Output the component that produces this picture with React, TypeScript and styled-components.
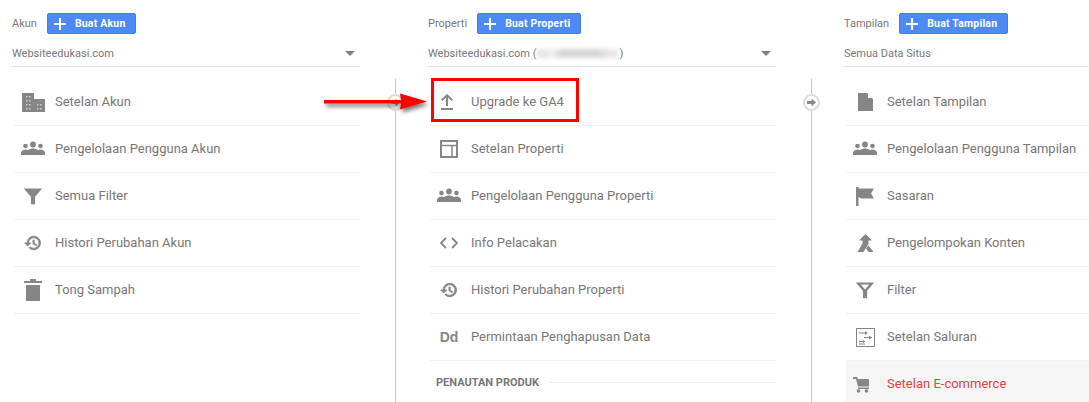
import React from 'react';
import styled, { createGlobalStyle } from 'styled-components';

const GlobalStyle = createGlobalStyle`
  html, body {
    margin: 0;
    padding: 0;
    background: #fff;
    overflow: hidden;
  }
  body {
    font-family: Roboto, "Liberation Sans", sans-serif;
    color: #777;
  }
`;

const Page = styled.div`
  position: relative;
  display: flex;
  width: 1089px;
  height: 402px;
  padding-left: 12px;
  box-sizing: border-box;
  overflow: hidden;
`;

const Column = styled.section`
  flex: 0 0 348px;
  padding-top: 13px;
`;

const Rail = styled.div`
  flex: 0 0 68px;
  display: flex;
  flex-direction: column;
  align-items: center;
  padding: 79px 0 0 2px;
  box-sizing: border-box;
`;

const RailLine = styled.div<{ $grow?: boolean }>`
  width: 1px;
  background: #c6c6c6;
  flex: ${p => (p.$grow ? '1' : '0 0 15px')};
`;

const RailCircle = styled.div`
  width: 17px;
  height: 17px;
  flex: none;
  box-sizing: border-box;
  border: 2px solid #dcdcdc;
  border-radius: 50%;
  display: flex;
  align-items: center;
  justify-content: center;
  color: #8a8a8a;
`;

const Header = styled.div`
  display: flex;
  align-items: center;
  height: 21px;
  gap: 10px;
`;

const HeaderLabel = styled.span`
  font-size: 11px;
  color: #777;
`;

const CreateButton = styled.button`
  display: flex;
  align-items: center;
  height: 21px;
  padding: 0 10px 0 6px;
  gap: 9px;
  border: 1px solid #3f7fe8;
  border-radius: 2px;
  background: #4d8af5;
  color: #fff;
  font-family: Roboto, "Liberation Sans", sans-serif;
  font-size: 10.5px;
  font-weight: 700;
  letter-spacing: 0.2px;
`;

const Select = styled.div`
  display: flex;
  align-items: center;
  justify-content: space-between;
  height: 26px;
  padding: 6px 5px 0 0;
  border-bottom: 1px solid #e0e0e0;
  font-size: 11px;
  color: #777;
`;

const SelectText = styled.span`
  display: flex;
  align-items: center;
`;

const Caret = styled.span`
  width: 0;
  height: 0;
  border-left: 5px solid transparent;
  border-right: 5px solid transparent;
  border-top: 5px solid #808080;
`;

const Redacted = styled.span`
  display: inline-block;
  width: 81px;
  height: 9px;
  margin: 0 1px;
  background: linear-gradient(90deg, #e6e6e6 0 12%, #f2f2f2 18%, #d6d6d6 30% 75%, #e6e6e6 90%);
  filter: blur(2px);
`;

const List = styled.ul`
  list-style: none;
  margin: 12px 0 0;
  padding: 0 0 0 2px;
`;

const Row = styled.li<{ $active?: boolean }>`
  position: relative;
  display: flex;
  align-items: center;
  height: 47px;
  box-sizing: border-box;
  border-bottom: ${p => (p.$active ? 'none' : '1px solid #f0f0f0')};
  background: ${p => (p.$active ? '#f5f5f5' : 'transparent')};
  color: ${p => (p.$active ? '#df3f3f' : '#777')};
  font-size: 13px;
`;

const IconSlot = styled.span`
  flex: 0 0 38px;
  display: flex;
  align-items: center;
  justify-content: center;
  color: #868686;
`;

const RowText = styled.span`
  margin: 0 0 2px 3px;
`;

const DdMark = styled.span`
  font-family: "Liberation Sans", Arial, sans-serif;
  font-size: 14px;
  font-weight: 700;
  color: #868686;
`;

const SectionRow = styled.li`
  display: flex;
  align-items: center;
  gap: 10px;
  height: 42px;
  padding-left: 6px;
  font-size: 11px;
  font-weight: 700;
  color: #777;
`;

const SectionRule = styled.span`
  flex: 1;
  height: 1px;
  background: #ececec;
`;

const Callout = styled.div`
  position: absolute;
  left: 1px;
  top: -1px;
  width: 148px;
  height: 44px;
  box-sizing: border-box;
  border: 3px solid #ff0000;
`;

const ArrowMark = styled.svg`
  position: absolute;
  left: 320px;
  top: 88px;
  overflow: visible;
`;

type IconProps = { size?: number; children: React.ReactNode };

const Icon = ({ size = 24, children }: IconProps) => (
  <svg width={size} height={size} viewBox="0 0 24 24" fill="currentColor">
    {children}
  </svg>
);

const DomainIcon = () => (
  <svg width="23" height="19" viewBox="0 0 23 19" fill="currentColor">
    <path d="M0 0h12v6h11v13H0z" />
    <path
      fill="#cfcfcf"
      d="M4 3h1.500v1.500H4zm3 0h1.500v1.500H7zM4 7h1.500v1.500H4zm3 0h1.500v1.500H7zm-3 4h1.500v1.500H4zm3 0h1.500v1.500H7zm-3 4h1.500v1.500H4zm3 0h1.500v1.500H7zm8-4h1.500v1.500H15zm3 0h1.500v1.500H18zm-3 4h1.500v1.500H15zm3 0h1.500v1.500H18z"
    />
  </svg>
);

const GroupIcon = () => (
  <Icon>
    <circle cx="12" cy="7.500" r="2.900" />
    <circle cx="4.500" cy="9" r="2.300" />
    <circle cx="19.500" cy="9" r="2.300" />
    <path d="M0 18v-2.200c0-2 2.500-3.300 4.500-3.300 1 0 1.800.2 2.500.6 1.300-1 3.200-1.600 5-1.600s3.700.6 5 1.600c.7-.4 1.500-.6 2.500-.6 2 0 4.500 1.300 4.500 3.300V18z" />
  </Icon>
);

const FilterIcon = () => (
  <Icon size={20}>
    <path d="M1 3h22l-8.500 10v9h-5v-9z" />
  </Icon>
);

const FilterHollowIcon = () => (
  <Icon size={20}>
    <path fillRule="evenodd" d="M1 3h22l-8.500 10v9h-5v-9zM7 5.500l5 6 5-6z" />
  </Icon>
);

const HistoryIcon = () => (
  <Icon size={18}>
    <path
      stroke="currentColor"
      strokeWidth="1.200"
      d="M13 3a9 9 0 0 0-9 9H1l3.890 3.890.07.14L9 12H6c0-3.870 3.130-7 7-7s7 3.130 7 7-3.130 7-7 7c-1.930 0-3.680-.79-4.940-2.060l-1.420 1.420A8.954 8.954 0 0 0 13 21a9 9 0 0 0 0-18zm-1 5v5l4.280 2.540.72-1.210-3.500-2.080V8H12z"
    />
  </Icon>
);

const TrashIcon = () => (
  <Icon>
    <path d="M5 7h14v16H5zM3 3h18v2H3zM9 1h6v2H9z" />
  </Icon>
);

const UploadIcon = () => (
  <svg width="16" height="16" viewBox="0 0 16 16" fill="currentColor">
    <path d="M0 14h12v2H0zM5 12V3.500L1.500 7 0 5.600 6 0l6 5.600L10.500 7 7 3.500V12z" />
  </svg>
);

const LayoutIcon = () => (
  <svg width="18" height="18" viewBox="0 0 18 18" fill="none" stroke="currentColor">
    <rect x="1" y="1" width="16" height="16" strokeWidth="2" />
    <path d="M1 5.500h16M12 5.500V17" strokeWidth="1.500" />
  </svg>
);

const CodeIcon = () => (
  <svg width="20" height="12" viewBox="0 0 20 12" fill="none" stroke="currentColor" strokeWidth="1.800">
    <path d="M7 1 2 6l5 5M13 1l5 5-5 5" />
  </svg>
);

const DocIcon = () => (
  <svg width="15" height="18" viewBox="0 0 15 18">
    <path fill="currentColor" d="M0 0h9l6 6v12H0z" />
    <path fill="#fff" d="M10 1l4 4h-4z" />
  </svg>
);

const FlagIcon = () => (
  <svg width="18" height="19" viewBox="0 0 18 19" fill="currentColor">
    <path d="M0 0h2.500v1.500h15.500l-3 5 3 5H5L2.500 10v9H0z" />
  </svg>
);

const MergeIcon = () => (
  <svg width="17" height="18" viewBox="0 0 17 18" fill="currentColor">
    <path d="M8.500 0l6.500 6.500h-3.500v3.500L6.500 18h-6l5-8.500V6.500H2z" />
    <path d="M11.500 11.500 16.500 18h-5L9 14.500z" />
  </svg>
);

const ChannelIcon = () => (
  <svg width="19" height="19" viewBox="0 0 19 19" fill="none" stroke="currentColor">
    <rect x="0.500" y="0.500" width="18" height="18" />
    <path d="M3 5h7M3 13.500h4M8 9.500h8M9 16h-6" strokeWidth="1.200" />
    <path fill="currentColor" stroke="none" d="M9 3l3 2-3 2zM13 7.500l3 2-3 2zM7 12l2.500 1.500L7 15z" />
  </svg>
);

const CartIcon = () => (
  <svg width="24" height="16" viewBox="0 0 24 16" fill="currentColor">
    <path d="M0 0h4l1 2h11v7.500H5L3 2H0z" />
    <path d="M5 10.500h11V12H5z" />
    <circle cx="5.500" cy="14" r="1.800" />
    <circle cx="13.500" cy="14" r="1.800" />
  </svg>
);

const PlusIcon = () => (
  <svg width="12" height="12" viewBox="0 0 12 12" fill="#fff">
    <path d="M5 0h2v5h5v2H7v5H5V7H0V5h5z" />
  </svg>
);

const CircleArrowIcon = () => (
  <svg width="9" height="9" viewBox="0 0 9 9" fill="currentColor">
    <path d="M0 3h4.500V0.500L9 4.500 4.500 8.500V6H0z" />
  </svg>
);

type Item = { label: string; icon: React.ReactNode; active?: boolean; callout?: boolean };

const accountItems: Item[] = [
  { label: 'Setelan Akun', icon: <DomainIcon /> },
  { label: 'Pengelolaan Pengguna Akun', icon: <GroupIcon /> },
  { label: 'Semua Filter', icon: <FilterIcon /> },
  { label: 'Histori Perubahan Akun', icon: <HistoryIcon /> },
  { label: 'Tong Sampah', icon: <TrashIcon /> },
];

const propertyItems: Item[] = [
  { label: 'Upgrade ke GA4', icon: <UploadIcon />, callout: true },
  { label: 'Setelan Properti', icon: <LayoutIcon /> },
  { label: 'Pengelolaan Pengguna Properti', icon: <GroupIcon /> },
  { label: 'Info Pelacakan', icon: <CodeIcon /> },
  { label: 'Histori Perubahan Properti', icon: <HistoryIcon /> },
  { label: 'Permintaan Penghapusan Data', icon: <DdMark>Dd</DdMark> },
];

const viewItems: Item[] = [
  { label: 'Setelan Tampilan', icon: <DocIcon /> },
  { label: 'Pengelolaan Pengguna Tampilan', icon: <GroupIcon /> },
  { label: 'Sasaran', icon: <FlagIcon /> },
  { label: 'Pengelompokan Konten', icon: <MergeIcon /> },
  { label: 'Filter', icon: <FilterHollowIcon /> },
  { label: 'Setelan Saluran', icon: <ChannelIcon /> },
  { label: 'Setelan E-commerce', icon: <CartIcon />, active: true },
];

const renderRows = (items: Item[]) =>
  items.map(item => (
    <Row key={item.label} $active={item.active}>
      <IconSlot>{item.icon}</IconSlot>
      <RowText>{item.label}</RowText>
      {item.callout && <Callout />}
    </Row>
  ));

const ConnectorRail = () => (
  <Rail>
    <RailLine />
    <RailCircle>
      <CircleArrowIcon />
    </RailCircle>
    <RailLine $grow />
  </Rail>
);

const App: React.FC = () => (
  <Page>
    <GlobalStyle />
    <Column>
      <Header>
        <HeaderLabel>Akun</HeaderLabel>
        <CreateButton>
          <PlusIcon />
          Buat Akun
        </CreateButton>
      </Header>
      <Select>
        <SelectText>Websiteedukasi.com</SelectText>
        <Caret />
      </Select>
      <List>{renderRows(accountItems)}</List>
    </Column>
    <ConnectorRail />
    <Column>
      <Header>
        <HeaderLabel>Properti</HeaderLabel>
        <CreateButton>
          <PlusIcon />
          Buat Properti
        </CreateButton>
      </Header>
      <Select>
        <SelectText>
          Websiteedukasi.com (<Redacted />)
        </SelectText>
        <Caret />
      </Select>
      <List>
        {renderRows(propertyItems)}
        <SectionRow>
          PENAUTAN PRODUK
          <SectionRule />
        </SectionRow>
      </List>
    </Column>
    <ConnectorRail />
    <Column>
      <Header>
        <HeaderLabel>Tampilan</HeaderLabel>
        <CreateButton>
          <PlusIcon />
          Buat Tampilan
        </CreateButton>
      </Header>
      <Select>
        <SelectText>Semua Data Situs</SelectText>
      </Select>
      <List>{renderRows(viewItems)}</List>
    </Column>
    <ArrowMark width="110" height="28" viewBox="0 0 110 28">
      <defs>
        <filter id="arrow-shadow" x="-10%" y="-50%" width="120%" height="220%">
          <feDropShadow dx="2" dy="3" stdDeviation="2" floodColor="#000" floodOpacity="0.55" />
        </filter>
      </defs>
      <path
        filter="url(#arrow-shadow)"
        fill="#ff0000"
        d="M4 12h77l-1-6.500 27 8-27 8 1-6H4z"
      />
    </ArrowMark>
  </Page>
);

export default App;
